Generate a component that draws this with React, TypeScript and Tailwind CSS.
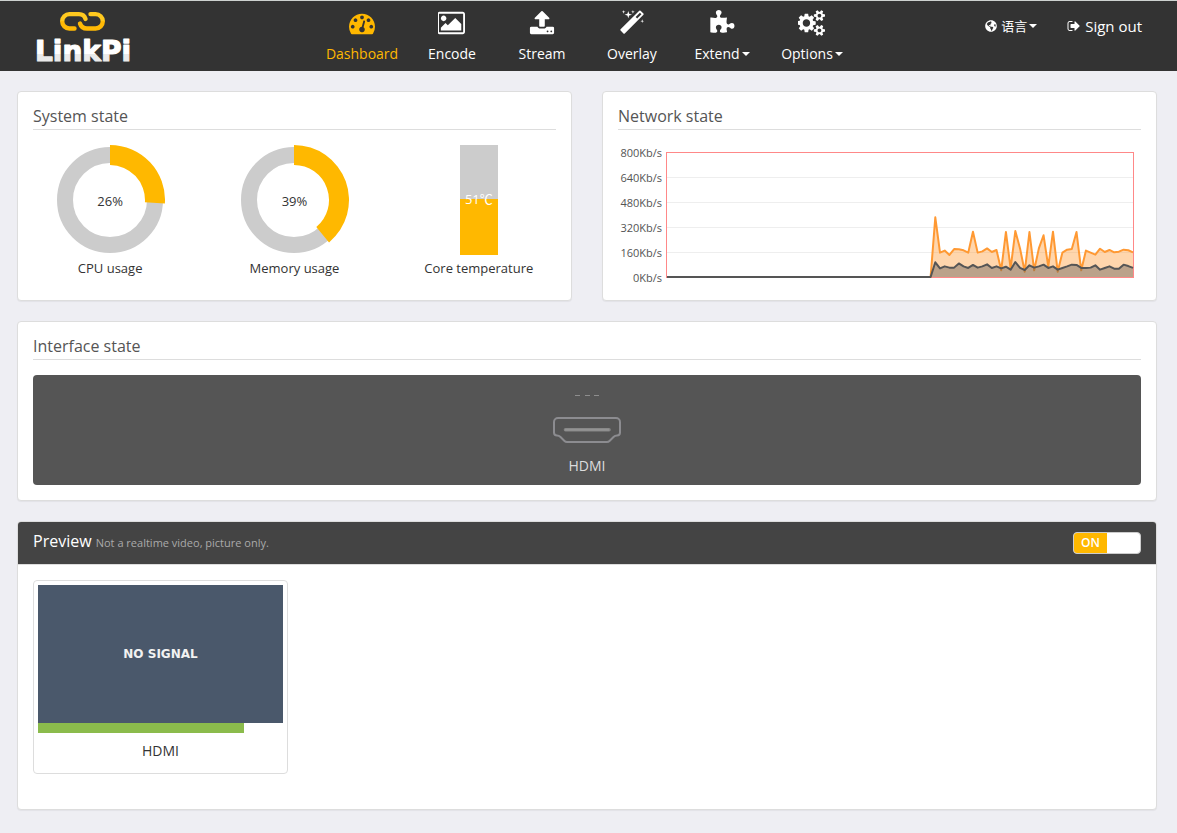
import React, { useState } from "react";
import { FaGlobeAmericas } from "react-icons/fa";

const ICONS = {
  dashboard: {
    box: "0 0 1792 1792",
    d: "M384 1152q0-53-37.5-90.5t-90.5-37.5-90.5 37.5-37.5 90.5 37.5 90.5 90.5 37.5 90.5-37.5 37.5-90.5zm192-448q0-53-37.5-90.5t-90.5-37.5-90.5 37.5-37.5 90.5 37.5 90.5 90.5 37.5 90.5-37.5 37.5-90.5zm428 481l101-382q6-26-7.5-48.5t-38.5-29.5-48 6.5-30 39.5l-101 382q-60 5-107 43.5t-63 98.5q-20 77 20 146t117 89 146-20 89-117q16-60-6-117t-72-91zm660-33q0-53-37.5-90.5t-90.5-37.5-90.5 37.5-37.5 90.5 37.5 90.5 90.5 37.5 90.5-37.5 37.5-90.5zm-640-640q0-53-37.5-90.5t-90.5-37.5-90.5 37.5-37.5 90.5 37.5 90.5 90.5 37.5 90.5-37.5 37.5-90.5zm448 192q0-53-37.5-90.5t-90.5-37.5-90.5 37.5-37.5 90.5 37.5 90.5 90.5 37.5 90.5-37.5 37.5-90.5zm320 448q0 261-141 483-19 29-54 29h-1402q-35 0-54-29-141-221-141-483 0-182 71-348t191-286 286-191 348-71 348 71 286 191 191 286 71 348z",
  },
  image: {
    box: "-64 0 1920 1792",
    d: "M512 576q0 80-56 136t-136 56-136-56-56-136 56-136 136-56 136 56 56 136zm1024 384v448h-1408v-192l320-320 160 160 512-512zm96-704h-1600q-13 0-22.500 9.500t-9.500 22.500v1216q0 13 9.500 22.500t22.500 9.500h1600q13 0 22.500-9.500t9.500-22.500v-1216q0-13-9.500-22.500t-22.500-9.500zm160 32v1216q0 66-47 113t-113 47h-1600q-66 0-113-47t-47-113v-1216q0-66 47-113t113-47h1600q66 0 113 47t47 113z",
  },
  upload: {
    box: "0 0 1792 1792",
    d: "M1344 1472q0-26-19-45t-45-19-45 19-19 45 19 45 45 19 45-19 19-45zm256 0q0-26-19-45t-45-19-45 19-19 45 19 45 45 19 45-19 19-45zm128-224v320q0 40-28 68t-68 28h-1472q-40 0-68-28t-28-68v-320q0-40 28-68t68-28h427q21 56 70.5 92t110.500 36h256q61 0 110.500-36t70.500-92h427q40 0 68 28t28 68zm-325-648q-17 40-59 40h-256v448q0 26-19 45t-45 19h-256q-26 0-45-19t-19-45v-448h-256q-42 0-59-40-17-39 14-69l448-448q18-19 45-19t45 19l448 448q31 30 14 69z",
  },
  magic: {
    box: "0 0 1792 1792",
    d: "M1254 581l293-293-107-107-293 293zm447-293q0 27-18 45l-1286 1286q-18 18-45 18t-45-18l-198-198q-18-18-18-45t18-45l1286-1286q18-18 45-18t45 18l198 198q18 18 18 45zm-1351-190l98 30-98 30-30 98-30-98-98-30 98-30 30-98zm350 162l196 60-196 60-60 196-60-196-196-60 196-60 60-196zm930 478l98 30-98 30-30 98-30-98-98-30 98-30 30-98zm-640-640l98 30-98 30-30 98-30-98-98-30 98-30 30-98z",
  },
  puzzle: {
    box: "0 0 1792 1792",
    d: "M1755 1098q0 81-44.5 135t-123.500 54q-41 0-77.500-17.500t-59-38-56.500-38-71-17.500q-110 0-110 124 0 39 16 115t15 115v5q-22 0-33 1-34 3-97.500 11.500t-115.500 13.500-98 5q-61 0-103-26.500t-42-83.500q0-37 17.500-71t38-56.500 38-59 17.500-77.500q0-79-54-123.500t-135-44.500q-84 0-143 45.500t-59 127.500q0 43 15 83t33.500 64.500 33.500 53 15 50.500q0 45-46 89-37 35-117 35-95 0-245-24-9-2-27.500-4t-27.500-4l-13-2q-1 0-3-1-2 0-2-1v-1024q2 1 17.500 3.500t34 5 21.500 3.500q150 24 245 24 80 0 117-35 46-44 46-89 0-22-15-50.500t-33.500-53-33.500-64.500-15-83q0-82 59-127.500t144-45.500q80 0 134 44.500t54 123.500q0 41-17.500 77.500t-38 59-38 56.500-17.500 71q0 57 42 83.500t103 26.500q64 0 180-15t163-17v2q-1 2-3.500 17.500t-5 34-3.500 21.500q-24 150-24 245 0 80 35 117 44 46 89 46 22 0 50.500-15t53-33.500 64.500-33.500 83-15q82 0 127.500 59t45.500 143z",
  },
  cogs: {
    box: "0 0 1920 1792",
    d: "M832 896q0-106-75-181t-181-75-181 75-75 181 75 181 181 75 181-75 75-181zm768 512q0-52-38-90t-90-38-90 38-38 90q0 53 37.5 90.500t90.500 37.500 90.500-37.500 37.500-90.500zm0-1024q0-52-38-90t-90-38-90 38-38 90q0 53 37.500 90.500t90.500 37.500 90.500-37.500 37.500-90.500zm-384 421v185q0 10-7 19.500t-16 10.500l-155 24q-11 35-32 76 34 48 90 115 7 11 7 20 0 12-7 19-23 30-82.500 89.500t-78.500 59.500q-11 0-21-7l-115-90q-37 19-77 31-11 108-23 155-7 24-30 24h-186q-11 0-20-7.500t-10-17.500l-23-153q-34-10-75-31l-118 89q-7 7-20 7-11 0-21-8-144-133-144-160 0-9 7-19 10-14 41-53t47-61q-23-44-35-82l-152-24q-10-1-17-9.500t-7-19.500v-185q0-10 7-19.500t16-10.500l155-24q11-35 32-76-34-48-90-115-7-11-7-20 0-12 7-20 22-30 82-89t79-59q11 0 21 7l115 90q34-18 77-32 11-108 23-154 7-24 30-24h186q11 0 20 7.500t10 17.500l23 153q34 10 75 31l118-89q8-7 20-7 11 0 21 8 144 133 144 160 0 8-7 19-12 16-42 54t-45 60q23 48 34 82l152 23q10 2 17 10.500t7 19.500zm640 533v140q0 16-149 31-12 27-30 52 51 113 51 138 0 4-4 7-122 71-124 71-8 0-46-47t-52-68q-20 2-30 2t-30-2q-14 21-52 68t-46 47q-2 0-124-71-4-3-4-7 0-25 51-138-18-25-30-52-149-15-149-31v-140q0-16 149-31 13-29 30-52-51-113-51-138 0-4 4-7 4-2 35-20t59-34 30-16q8 0 46 46.500t52 67.500q20-2 30-2t30 2q51-71 92-112l6-2q4 0 124 70 4 3 4 7 0 25-51 138 17 23 30 52 149 15 149 31zm0-1024v140q0 16-149 31-12 27-30 52 51 113 51 138 0 4-4 7-122 71-124 71-8 0-46-47t-52-68q-20 2-30 2t-30-2q-14 21-52 68t-46 47q-2 0-124-71-4-3-4-7 0-25 51-138-18-25-30-52-149-15-149-31v-140q0-16 149-31 13-29 30-52-51-113-51-138 0-4 4-7 4-2 35-20t59-34 30-16q8 0 46 46.500t52 67.500q20-2 30-2t30 2q51-71 92-112l6-2q4 0 124 70 4 3 4 7 0 25-51 138 17 23 30 52 149 15 149 31z",
  },
  signOut: {
    box: "0 0 1792 1792",
    d: "M704 1440q0 4 1 20t.5 26.500-3 23.500-10 19.500-20.500 6.500h-320q-119 0-203.500-84.500t-84.500-203.500v-704q0-119 84.500-203.500t203.500-84.500h320q13 0 22.500 9.500t9.500 22.500q0 4 1 20t.5 26.500-3 23.500-10 19.500-20.500 6.500h-320q-66 0-113 47t-47 113v704q0 66 47 113t113 47h312l11.500 1 11.500 3 8 5.500 7 9 2 13.500zm928-544q0 26-19 45l-544 544q-19 19-45 19t-45-19-19-45v-288h-448q-26 0-45-19t-19-45v-384q0-26 19-45t45-19h448v-288q0-26 19-45t45-19 45 19l544 544q19 19 19 45z",
  },
};

type IconName = keyof typeof ICONS;

function Icon({ name, className }: { name: IconName; className: string }) {
  return (
    <svg viewBox={ICONS[name].box} className={className} fill="currentColor" aria-hidden="true">
      <path d={ICONS[name].d} />
    </svg>
  );
}

function Caret() {
  return <span className="ml-0.5 border-x-4 border-t-4 border-x-transparent border-t-current" />;
}

function Logo() {
  return (
    <svg viewBox="0 0 104 64" className="h-16 w-[104px] overflow-visible" role="img" aria-label="LinkPi">
      <defs>
        <linearGradient id="gold" x1="0" y1="0" x2="0" y2="1">
          <stop offset="0.48" stopColor="#ffc91f" />
          <stop offset="0.52" stopColor="#ffb905" />
        </linearGradient>
        <linearGradient id="silver" x1="0" y1="32" x2="0" y2="56" gradientUnits="userSpaceOnUse">
          <stop offset="0.62" stopColor="#ffffff" />
          <stop offset="0.64" stopColor="#eaeaea" />
        </linearGradient>
      </defs>
      <g fill="none" stroke="url(#gold)" strokeWidth="4.400" strokeLinecap="round" strokeLinejoin="round">
        <path d="M39.500 21.500H34.400a7.200 7.200 0 0 1 0-14.400H44q5 0 6.500 4.800" />
        <path d="M55.500 7.100H60.600a7.200 7.200 0 0 1 0 14.400H52q-5.500 0-7-5" />
      </g>
      <text
        x="0"
        y="54"
        fill="url(#silver)"
        stroke="url(#silver)"
        strokeWidth="1.200"
        strokeLinejoin="round"
        className="font-['DejaVu_Sans'] text-[28px] font-bold"
      >
        LinkPi
      </text>
    </svg>
  );
}

const NAV: { label: string; icon: IconName; wide?: boolean; active?: boolean; menu?: boolean }[] = [
  { label: "Dashboard", icon: "dashboard", active: true },
  { label: "Encode", icon: "image", wide: true },
  { label: "Stream", icon: "upload" },
  { label: "Overlay", icon: "magic" },
  { label: "Extend", icon: "puzzle", menu: true },
  { label: "Options", icon: "cogs", wide: true, menu: true },
];

function Header() {
  return (
    <header className="flex h-[71px] items-start border-t border-[#cdd2d0] bg-[#333] pl-[35px] pr-[35px] text-white">
      <a href="#home" className="mt-1.5 w-[282px] shrink-0">
        <Logo />
      </a>
      <nav className="flex flex-1">
        {NAV.map((item) => (
          <a
            key={item.label}
            href={"#" + item.label.toLowerCase()}
            className={
              "flex w-[90px] flex-col items-center gap-1.5 pt-[9px] text-sm " +
              (item.active ? "text-[#ffb800]" : "text-white")
            }
          >
            <Icon name={item.icon} className={item.wide ? "h-[26px] w-7" : "size-[26px]"} />
            <span className="flex items-center leading-6">
              {item.label}
              {item.menu && <Caret />}
            </span>
          </a>
        ))}
      </nav>
      <div className="flex items-center gap-[30px] pt-[13px] text-sm leading-6">
        <button type="button" className="flex items-center">
          <FaGlobeAmericas className="mr-1 size-3" />
          <span className="text-[13px]">语言</span>
          <Caret />
        </button>
        <a href="#signout" className="flex items-center gap-1 text-[15px]">
          <Icon name="signOut" className="size-3.5" />
          Sign out
        </a>
      </div>
    </header>
  );
}

const CARD = "rounded border border-[#ddd] bg-white shadow-[0_1px_1px_rgba(0,0,0,0.05)]";

function Panel({ title, className, children }: { title: string; className: string; children: React.ReactNode }) {
  return (
    <section className={CARD + " px-[15px] pt-3 " + className}>
      <h2 className="border-b border-[#ddd] pb-px text-base leading-6 text-[#555]">{title}</h2>
      {children}
    </section>
  );
}

function Donut({ value, label }: { value: number; label: string }) {
  const angle = (value / 100) * 2 * Math.PI;
  const at = (r: number) => `${55 + r * Math.sin(angle)} ${55 - r * Math.cos(angle)}`;
  return (
    <div className="flex flex-col items-center">
      <div className="relative">
        <svg viewBox="0 0 110 110" className="size-[110px]" aria-hidden="true">
          <circle cx="55" cy="55" r="45" fill="none" stroke="#ccc" strokeWidth="16" />
          <path d={`M55 0A55 55 0 0 1 ${at(55)}L${at(35)}A35 35 0 0 0 55 20Z`} fill="#ffb800" />
        </svg>
        <span className="absolute inset-0 flex items-center justify-center pt-1">{value}%</span>
      </div>
      <span className="mt-[3px] leading-5">{label}</span>
    </div>
  );
}

function SystemState() {
  return (
    <Panel title="System state" className="h-[210px]">
      <div className="-mx-[15px] grid grid-cols-3 pt-[15px] text-[13px] text-[#333]">
        <Donut value={26} label="CPU usage" />
        <Donut value={39} label="Memory usage" />
        <div className="flex flex-col items-center">
          <div className="relative flex h-[110px] w-[38px] items-end bg-[#ccc]">
            <div className="w-full bg-[#ffb800]" style={{ height: "51%" }} />
            <span className="absolute inset-0 flex items-center justify-center text-white">51℃</span>
          </div>
          <span className="mt-[3px] leading-5">Core temperature</span>
        </div>
      </div>
    </Panel>
  );
}

const IDLE: number[] = new Array(57).fill(0);
const RECEIVED = IDLE.concat([
  382, 156, 169, 141, 179, 177, 171, 156, 290, 156, 164, 183, 160, 173, 43, 288, 55, 294, 183, 34, 288, 43, 183, 267,
  66, 290, 34, 156, 175, 179, 288, 43, 169, 156, 143, 181, 160, 173, 158, 162, 175, 171, 158,
]);
const SENT = IDLE.concat([
  94, 55, 68, 60, 60, 87, 68, 58, 77, 60, 68, 81, 58, 68, 55, 66, 47, 96, 58, 45, 75, 60, 68, 79, 58, 68, 47, 58, 68,
  79, 77, 58, 58, 60, 75, 47, 58, 68, 53, 53, 79, 70, 58,
]);

function points(series: number[]) {
  return series.map((v, i) => `${1 + (i * 466) / (series.length - 1)},${125 - (v * 125) / 800}`).join(" ");
}

function NetworkState() {
  return (
    <Panel title="Network state" className="h-[210px]">
      <div className="flex gap-1 pt-[14px] pr-[7px]">
        <ul className="flex w-11 shrink-0 flex-col text-right text-[11px] text-[#545454]">
          {[800, 640, 480, 320, 160, 0].map((v) => (
            <li key={v} className="h-[25px] leading-[18px]">
              {v}Kb/s
            </li>
          ))}
        </ul>
        <svg viewBox="0 0 468 127" preserveAspectRatio="none" className="mt-2 h-[127px] min-w-0 flex-1" aria-hidden="true">
          {[25, 50, 75, 100].map((y) => (
            <path key={y} d={`M1 ${y + 0.5}H467`} stroke="#eeeeee" />
          ))}
          <rect
            x="0.500"
            y="0.500"
            width="467"
            height="125"
            fill="none"
            stroke="#ff8888"
            strokeWidth="1"
            shapeRendering="crispEdges"
          />
          <polygon points={`1,125 ${points(RECEIVED)} 467,125`} fill="#ff9933" fillOpacity="0.400" />
          <polyline points={points(RECEIVED)} fill="none" stroke="#ff9933" strokeWidth="2" strokeLinejoin="round" />
          <polygon points={`1,125 ${points(SENT)} 467,125`} fill="#555555" fillOpacity="0.400" />
          <polyline points={points(SENT)} fill="none" stroke="#555555" strokeWidth="2" strokeLinejoin="round" />
        </svg>
      </div>
    </Panel>
  );
}

function InterfaceState() {
  return (
    <Panel title="Interface state" className="h-[180px]">
      <div className="mt-[15px] flex h-[110px] flex-col items-center rounded bg-[#555] pt-2.5 text-sm text-[#ddd]">
        <svg viewBox="0 0 26 20" className="h-5 w-[26px]" aria-hidden="true">
          <path d="M1 10.500h5M11 10.500h5M20 10.500h5" stroke="#8e8e8e" />
        </svg>
        <svg viewBox="0 0 68 26" className="mt-3 h-[26px] w-[68px]" fill="none" aria-hidden="true">
          <path
            d="M5 1H63a4 4 0 0 1 4 4V15.500a3 3 0 0 1-3 3q-2 0-3.500 1.500L56.500 24q-1 1-2.500 1H14q-1.500 0-2.500-1L7.500 20Q6 18.500 4 18.500a3 3 0 0 1-3-3V5a4 4 0 0 1 4-4Z"
            stroke="#8c8c90"
            strokeWidth="2"
          />
          <path d="M12.500 12.800H56" stroke="#858585" strokeWidth="3.600" strokeLinecap="round" />
          <path d="M12.500 12.800H56" stroke="#a0a0a0" strokeWidth="2" strokeDasharray="1 1" />
        </svg>
        <span className="mt-[13px] leading-5">HDMI</span>
      </div>
    </Panel>
  );
}

function Preview() {
  const [on, setOn] = useState(true);
  return (
    <section className={CARD + " h-[289px] overflow-hidden"}>
      <div className="flex h-[43px] items-center justify-between border-b border-[#ddd] bg-[#444] px-[15px]">
        <h2 className="pb-0.5 text-base leading-6 font-medium text-white">
          Preview <small className="text-[11px] font-normal text-[#aaa]">Not a realtime video, picture only.</small>
        </h2>
        <button
          type="button"
          role="switch"
          aria-checked={on}
          aria-label="Preview"
          onClick={() => setOn(!on)}
          className={
            "flex h-[22px] w-[68px] overflow-hidden rounded border border-[#ccc] bg-white text-xs leading-5 font-semibold " +
            (on ? "justify-start" : "justify-end")
          }
        >
          <span className={on ? "w-[33px] bg-[#ffb800] text-white" : "w-[33px] bg-[#ddd] text-[#555]"}>
            {on ? "ON" : "OFF"}
          </span>
        </button>
      </div>
      <div className="flex items-start p-[15px]">
        <figure className="w-[255px] rounded border border-[#ddd] p-1">
          <div className="flex h-[138px] items-center justify-center bg-[#4a586b] font-['DejaVu_Sans'] text-xs font-bold text-[#f2f2f2]">
            NO SIGNAL
          </div>
          <div className="h-2.5 bg-[#8bbb4c]" style={{ width: "84%" }} />
          <figcaption className="py-2 text-center text-sm leading-5 text-[#333]">HDMI</figcaption>
        </figure>
      </div>
    </section>
  );
}

export default function App() {
  return (
    <div className="min-h-screen bg-[#eeeef3] font-['Open_Sans','Noto_Sans_CJK_SC',sans-serif]">
      <Header />
      <main className="flex flex-col gap-5 pt-5 pr-5 pb-5 pl-[17px]">
        <div className="grid grid-cols-2 gap-[30px]">
          <SystemState />
          <NetworkState />
        </div>
        <InterfaceState />
        <Preview />
      </main>
    </div>
  );
}
